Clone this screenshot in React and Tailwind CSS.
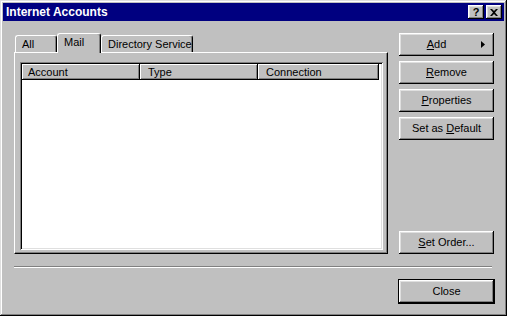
import React from 'react';

const raised =
  'shadow-[inset_-1px_-1px_0_#000,inset_1px_1px_0_#fff,inset_-2px_-2px_0_#808080,inset_2px_2px_0_#dfdfdf]';

function Btn({ children, className = '' }) {
  return (
    <button
      className={`h-[23px] w-[95px] bg-[#c0c0c0] text-[11px] text-black flex items-center justify-center ${raised} ${className}`}
    >
      {children}
    </button>
  );
}

function Tab({ label, active, width }) {
  if (active) {
    return (
      <div
        className={`relative z-10 -mb-px h-[20px] ${width} bg-[#c0c0c0] border-t border-l border-white border-r border-r-black rounded-t-[3px] shadow-[inset_-1px_0_0_#808080] flex items-center pl-[6px] pb-[3px]`}
      >
        {label}
      </div>
    );
  }
  return (
    <div
      className={`h-[17px] ${width} bg-[#c0c0c0] border-t border-l border-white border-r border-r-black rounded-t-[3px] shadow-[inset_-1px_0_0_#808080] flex items-center pl-[6px]`}
    >
      {label}
    </div>
  );
}

function HeaderCell({ label, width }) {
  return (
    <div
      className={`${width} h-[16px] flex items-center pl-[6px] bg-[#c0c0c0] shadow-[inset_-1px_-1px_0_#000,inset_1px_1px_0_#fff,inset_-2px_-2px_0_#808080]`}
    >
      {label}
    </div>
  );
}

export default function App() {
  return (
    <div
      className="w-[507px] h-[316px] bg-[#c0c0c0] p-[3px] flex flex-col text-[11px] text-black shadow-[inset_-1px_-1px_0_#000,inset_1px_1px_0_#dfdfdf,inset_-2px_-2px_0_#808080,inset_2px_2px_0_#fff]"
      style={{ fontFamily: '"Liberation Sans", Arial, sans-serif' }}
    >
      {/* title bar */}
      <div className="h-[18px] bg-[#000080] flex items-center pl-[3px] pr-[2px]">
        <span className="text-white font-bold text-[12px] flex-1">Internet Accounts</span>
        <div className="flex gap-[2px]">
          <div className={`w-[16px] h-[14px] bg-[#c0c0c0] flex items-center justify-center font-bold text-[11px] leading-none ${raised}`}>
            ?
          </div>
          <div className={`w-[16px] h-[14px] bg-[#c0c0c0] flex items-center justify-center ${raised}`}>
            <svg width="8" height="7" viewBox="0 0 8 7">
              <path d="M0 0h2l2 2 2-2h2L5 3.5 8 7H6L4 5 2 7H0l3-3.5z" fill="#000" />
            </svg>
          </div>
        </div>
      </div>

      {/* body */}
      <div className="flex-1 flex flex-col pt-[12px] pl-[11px] pr-[9px]">
        <div className="flex h-[221px]">
          {/* tabs + panel */}
          <div className="w-[374px] flex flex-col">
            <div className="h-[19px] flex items-end pl-[1px]">
              <Tab label="All" width="w-[42px]" />
              <Tab label="Mail" active width="w-[44px]" />
              <Tab label="Directory Service" width="w-[92px]" />
            </div>
            <div className="flex-1 border border-t-white border-l-white border-r-black border-b-black shadow-[inset_-1px_-1px_0_#808080] pt-[9px] pl-[5px] pr-[4px] pb-[3px] flex">
              <div className="flex-1 bg-white p-[2px] shadow-[inset_1px_1px_0_#808080,inset_-1px_-1px_0_#fff,inset_2px_2px_0_#000,inset_-2px_-2px_0_#dfdfdf]">
                <div className="flex">
                  <HeaderCell label="Account" width="w-[118px]" />
                  <HeaderCell label="Type" width="w-[118px] pl-[8px]" />
                  <HeaderCell label="Connection" width="w-[121px] pl-[8px]" />
                </div>
              </div>
            </div>
          </div>

          {/* right buttons */}
          <div className="ml-[11px] flex flex-col gap-[5px]">
            <Btn className="relative">
              <span className="pr-[20px]">
                <span className="underline">A</span>dd
              </span>
              <svg className="absolute right-[9px] top-[8px]" width="4" height="7" viewBox="0 0 4 7">
                <path d="M0 0L4 3.5L0 7z" fill="#000" />
              </svg>
            </Btn>
            <Btn>
              <span>
                <span className="underline">R</span>emove
              </span>
            </Btn>
            <Btn>
              <span>
                <span className="underline">P</span>roperties
              </span>
            </Btn>
            <Btn>
              <span>
                Set as <span className="underline">D</span>efault
              </span>
            </Btn>
            <div className="flex-1" />
            <Btn>
              <span>
                <span className="underline">S</span>et Order...
              </span>
            </Btn>
          </div>
        </div>

        {/* separator */}
        <div className="mt-[12px] h-[2px] w-[478px] border-t border-t-[#808080] border-b border-b-white" />

        <div className="mt-[11px] flex justify-end">
          <div className="border border-black">
            <Btn className="w-[93px] h-[21px]">Close</Btn>
          </div>
        </div>
      </div>
    </div>
  );
}
